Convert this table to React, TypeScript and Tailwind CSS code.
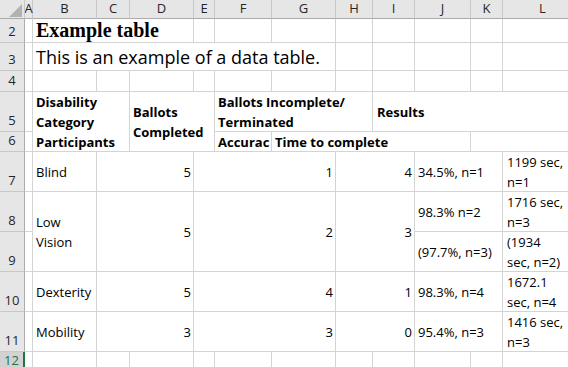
import type { ReactNode } from "react";

const cols = ["A", "B", "C", "D", "E", "F", "G", "H", "I", "J", "K", "L"];

function Col({ label }: { label: string }) {
  return (
    <div className="flex items-center justify-center border-r border-b border-r-[#c8c8c8] border-b-[#ababab] bg-[#e6e6e6] text-[13px] text-[#262626]">
      {label}
    </div>
  );
}

function Row({ n, active }: { n: number; active?: boolean }) {
  return (
    <div
      className={
        active
          ? "flex items-end justify-center border-r-2 border-b border-r-[#217346] border-b-[#c8c8c8] bg-[#d2d2d2] pb-[1px] text-[13px] text-[#217346]"
          : "flex items-end justify-center border-r border-b border-r-[#ababab] border-b-[#c8c8c8] bg-[#e6e6e6] pb-[1px] text-[13px] text-[#262626]"
      }
    >
      {n}
    </div>
  );
}

function Cell({
  children,
  className = "",
}: {
  children?: ReactNode;
  className?: string;
}) {
  return (
    <div
      className={`flex overflow-hidden whitespace-nowrap border-r border-b border-[#d4d4d4] leading-[20px] ${className}`}
    >
      {children}
    </div>
  );
}

function Empty({ count }: { count: number }) {
  return (
    <>
      {Array.from({ length: count }).map((_, i) => (
        <Cell key={i} />
      ))}
    </>
  );
}

const num = "items-center justify-end pr-[2px]";
const txt = "items-center pl-[3px]";
const two = "flex-col justify-center pl-[4px]";

export default function App() {
  return (
    <div className="h-[367px] w-[568px] overflow-hidden bg-white font-['Open_Sans'] text-[13px] text-black">
      <div className="grid grid-cols-[25px_8px_64px_33px_64px_21px_57px_64px_37px_42px_56px_32px_80px] grid-rows-[19px_24px_28px_21px_40px_20px_40px_40px_40px_40px_40px_20px]">
        {/* corner with select-all triangle */}
        <div className="relative border-r border-b border-r-[#c8c8c8] border-b-[#ababab] bg-[#e6e6e6]">
          <svg
            className="absolute right-[2px] bottom-[1px]"
            width="13"
            height="13"
            viewBox="0 0 13 13"
          >
            <path d="M13 0 L13 13 L0 13 Z" fill="#b2b2b2" />
          </svg>
        </div>
        {cols.map((c) => (
          <Col key={c} label={c} />
        ))}

        {/* row 2 */}
        <Row n={2} />
        <Cell />
        <Cell className="col-span-3 items-end pb-[1px] pl-[3px] font-['Liberation_Serif'] text-[20px] font-bold leading-[22px]">
          Example table
        </Cell>
        <Empty count={8} />

        {/* row 3 */}
        <Row n={3} />
        <Cell />
        <Cell className="col-span-6 items-end pb-[1px] pl-[3px] text-[18px] leading-[24px]">
          This is an example of a data table.
        </Cell>
        <Empty count={5} />

        {/* row 4 */}
        <Row n={4} />
        <Empty count={12} />

        {/* row 5 */}
        <Row n={5} />
        <Cell />
        <Cell className="col-span-2 row-span-2 flex-col justify-center pl-[3px] font-bold">
          <span>Disability</span>
          <span>Category</span>
          <span>Participants</span>
        </Cell>
        <Cell className="col-span-2 row-span-2 flex-col justify-center pl-[3px] font-bold">
          <span>Ballots</span>
          <span>Completed</span>
        </Cell>
        <Cell className="col-span-3 flex-col justify-center pl-[3px] font-bold">
          <span>Ballots Incomplete/</span>
          <span>Terminated</span>
        </Cell>
        <Cell className="col-span-4 items-center pl-[4px] font-bold">Results</Cell>

        {/* row 6 */}
        <Row n={6} />
        <Cell />
        <Cell className="items-center pl-[3px] font-bold">Accurac</Cell>
        <Cell className="col-span-4 items-center pl-[3px] font-bold">
          Time to complete
        </Cell>
        <Cell className="col-span-2" />

        {/* row 7 */}
        <Row n={7} />
        <Cell />
        <Cell className={txt}>Blind</Cell>
        <Cell className={`col-span-2 ${num}`}>5</Cell>
        <Cell className={`col-span-3 ${num}`}>1</Cell>
        <Cell className={`col-span-2 ${num}`}>4</Cell>
        <Cell className={`col-span-2 ${txt}`}>34.5%, n=1</Cell>
        <Cell className={two}>
          <span>1199 sec,</span>
          <span>n=1</span>
        </Cell>

        {/* rows 8-9 */}
        <Row n={8} />
        <Cell />
        <Cell className="row-span-2 flex-col justify-center pl-[3px]">
          <span>Low</span>
          <span>Vision</span>
        </Cell>
        <Cell className={`col-span-2 row-span-2 ${num}`}>5</Cell>
        <Cell className={`col-span-3 row-span-2 ${num}`}>2</Cell>
        <Cell className={`col-span-2 row-span-2 ${num}`}>3</Cell>
        <Cell className={`col-span-2 ${txt}`}>98.3% n=2</Cell>
        <Cell className={two}>
          <span>1716 sec,</span>
          <span>n=3</span>
        </Cell>
        <Row n={9} />
        <Cell />
        <Cell className={`col-span-2 ${txt}`}>(97.7%, n=3)</Cell>
        <Cell className={two}>
          <span>(1934</span>
          <span>sec, n=2)</span>
        </Cell>

        {/* row 10 */}
        <Row n={10} />
        <Cell />
        <Cell className={txt}>Dexterity</Cell>
        <Cell className={`col-span-2 ${num}`}>5</Cell>
        <Cell className={`col-span-3 ${num}`}>4</Cell>
        <Cell className={`col-span-2 ${num}`}>1</Cell>
        <Cell className={`col-span-2 ${txt}`}>98.3%, n=4</Cell>
        <Cell className={two}>
          <span>1672.1</span>
          <span>sec, n=4</span>
        </Cell>

        {/* row 11 */}
        <Row n={11} />
        <Cell />
        <Cell className={txt}>Mobility</Cell>
        <Cell className={`col-span-2 ${num}`}>3</Cell>
        <Cell className={`col-span-3 ${num}`}>3</Cell>
        <Cell className={`col-span-2 ${num}`}>0</Cell>
        <Cell className={`col-span-2 ${txt}`}>95.4%, n=3</Cell>
        <Cell className={two}>
          <span>1416 sec,</span>
          <span>n=3</span>
        </Cell>

        {/* row 12 */}
        <Row n={12} active />
        <Empty count={12} />
      </div>
    </div>
  );
}
